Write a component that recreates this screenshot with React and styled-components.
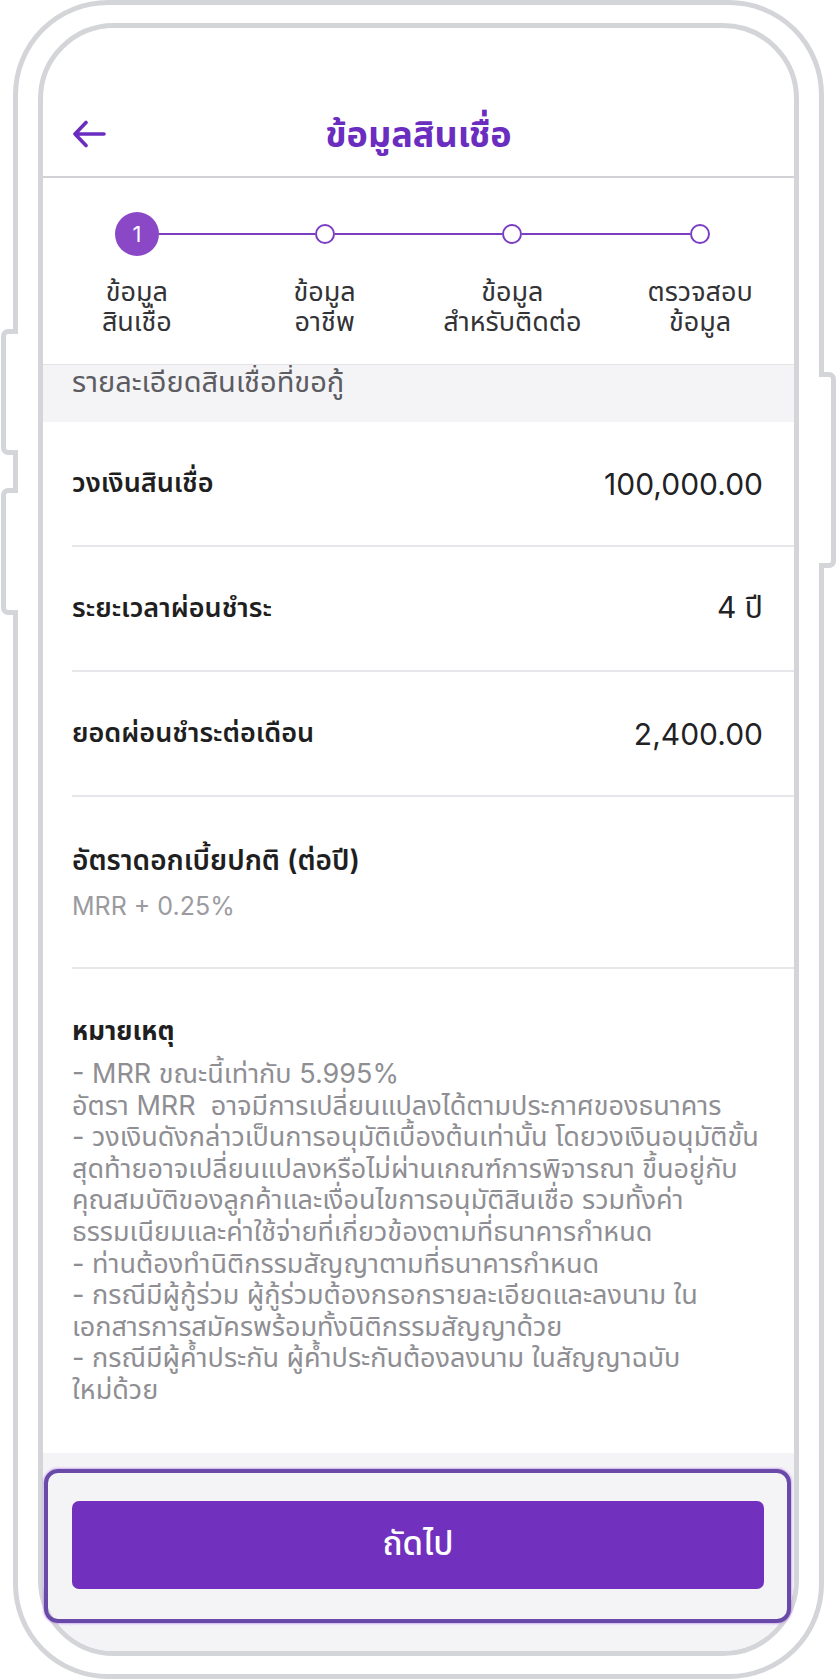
import React from "react";
import styled, { createGlobalStyle } from "styled-components";

const GlobalStyle = createGlobalStyle`
  html, body {
    margin: 0;
    padding: 0;
    background: #ffffff;
  }
  body {
    font-family: "Inter", "Noto Sans Thai", "Noto Sans Thai UI", "Noto Sans", sans-serif;
    -webkit-font-smoothing: antialiased;
  }
  * { box-sizing: border-box; }
`;

const FRAME = "#d4d5d8";
const PURPLE = "#6b2cc0";

const Phone = styled.div`
  position: relative;
  width: 837px;
  height: 1680px;
  overflow: hidden;
`;

const OuterFrame = styled.div`
  margin-left: 13px;
  width: 811px;
  height: 1679px;
  border: 5px solid ${FRAME};
  border-radius: 95px;
  padding: 18px 20px;
  display: flex;
`;

const SideButton = styled.div`
  position: absolute;
  top: ${(p) => p.$top}px;
  height: ${(p) => p.$height}px;
  width: 17px;
  background: #ffffff;
  border: 5px solid ${FRAME};
  ${(p) =>
    p.$side === "left"
      ? `left: 1px; border-right: none; border-radius: 7px 0 0 7px;`
      : `left: 819px; border-left: none; border-radius: 0 7px 7px 0;`}
`;

const Screen = styled.div`
  flex: 1;
  border: 5px solid ${FRAME};
  border-radius: 76px;
  overflow: hidden;
  display: flex;
  flex-direction: column;
  background: #ffffff;
`;

const Header = styled.header`
  flex-shrink: 0;
  height: 150px;
  padding-top: 63px;
  display: grid;
  grid-template-columns: 1fr auto 1fr;
  align-items: center;
  border-bottom: 2px solid #d2d2d6;
`;

const BackButton = styled.button`
  justify-self: start;
  margin-left: 29px;
  padding: 0;
  border: none;
  background: none;
  display: flex;
  cursor: pointer;
`;

const Title = styled.h1`
  margin: 0;
  font-size: 36px;
  font-weight: 700;
  color: ${PURPLE};
  line-height: 44px;
`;

const Stepper = styled.div`
  flex-shrink: 0;
  height: 186px;
  padding-top: 34px;
  display: grid;
  grid-template-columns: repeat(4, 1fr);
`;

const Step = styled.div`
  display: flex;
  flex-direction: column;
  align-items: center;
`;

const Track = styled.div`
  width: 100%;
  height: 44px;
  display: flex;
  align-items: center;
`;

const HalfLine = styled.div`
  flex: 1;
  height: 2px;
  background: ${(p) => (p.$hidden ? "transparent" : "#7b3ec3")};
`;

const Dot = styled.div`
  flex-shrink: 0;
  display: flex;
  align-items: center;
  justify-content: center;
  border-radius: 50%;
  ${(p) =>
    p.$active
      ? `width: 44px; height: 44px; background: #8a48c7; color: #fff; font-size: 22px;`
      : `width: 20px; height: 20px; background: #fff; border: 2px solid #7b3ec3;`}
`;

const StepLabel = styled.div`
  margin-top: 21px;
  font-size: 27px;
  line-height: 30px;
  color: #333336;
  text-align: center;
`;

const Body = styled.div`
  flex: 1;
  overflow: hidden;
  display: flex;
  flex-direction: column;
`;

const SectionHead = styled.div`
  flex-shrink: 0;
  height: 58px;
  overflow: hidden;
  background: #f4f4f7;
  border-top: 1px solid #e4e4e8;
  padding-left: 29px;
`;

const SectionText = styled.div`
  margin-top: 2px;
  font-size: 29px;
  line-height: 29px;
  color: #5c5c61;
`;

const DetailRow = styled.div`
  flex-shrink: 0;
  margin-left: 29px;
  padding-right: 31px;
  height: 125px;
  display: flex;
  justify-content: space-between;
  align-items: center;
  border-bottom: 2px solid #e7e7eb;
`;

const RowLabel = styled.div`
  font-size: 27px;
  font-weight: 600;
  color: #1f1f22;
`;

const RowValue = styled.div`
  font-size: 30px;
  color: #222225;
`;

const RateRow = styled.div`
  flex-shrink: 0;
  margin-left: 29px;
  height: 172px;
  padding-top: 45px;
  display: flex;
  flex-direction: column;
  gap: 13px;
  border-bottom: 2px solid #e7e7eb;
`;

const RateTitle = styled(RowLabel)`
  font-size: 28px;
  line-height: 36px;
`;

const RateSub = styled.div`
  font-size: 25px;
  line-height: 30px;
  color: #9b9b9f;
`;

const Notes = styled.div`
  flex: 1;
  padding: 44px 31px 0 29px;
`;

const NotesTitle = styled.div`
  font-size: 26px;
  font-weight: 700;
  line-height: 36px;
  color: #1f1f22;
`;

const NotesText = styled.p`
  margin: 9px 0 0;
  font-size: 27px;
  line-height: 31.6px;
  color: #8e8e93;
  white-space: pre;
`;

const Footer = styled.div`
  flex-shrink: 0;
  height: 198px;
  background: #f4f4f7;
  padding: 48px 30px 0 29px;
`;

const NextButton = styled.button`
  width: 100%;
  height: 88px;
  border: none;
  border-radius: 7px;
  background: #7230be;
  color: #ffffff;
  font-family: inherit;
  font-size: 33px;
  font-weight: 500;
  cursor: pointer;
`;

const Highlight = styled.div`
  position: absolute;
  left: 44px;
  top: 1469px;
  width: 747px;
  height: 154px;
  border: 4px solid #6a4aa8;
  border-radius: 14px;
  box-shadow: 0 0 2px 1px rgba(176, 110, 230, 0.5);
  pointer-events: none;
`;

const BackArrow = () => (
  <svg width="34" height="28" viewBox="0 0 34 28" fill="none">
    <path
      d="M32 14H3M14 2.5L3 14l11 11.5"
      stroke={PURPLE}
      strokeWidth="3.6"
      strokeLinecap="round"
      strokeLinejoin="round"
    />
  </svg>
);

const steps = [
  ["ข้อมูล", "สินเชื่อ"],
  ["ข้อมูล", "อาชีพ"],
  ["ข้อมูล", "สำหรับติดต่อ"],
  ["ตรวจสอบ", "ข้อมูล"],
];

const rows = [
  ["วงเงินสินเชื่อ", "100,000.00"],
  ["ระยะเวลาผ่อนชำระ", "4 ปี"],
  ["ยอดผ่อนชำระต่อเดือน", "2,400.00"],
];

const noteLines = [
  "- MRR ขณะนี้เท่ากับ 5.995%",
  "อัตรา MRR  อาจมีการเปลี่ยนแปลงได้ตามประกาศของธนาคาร",
  "- วงเงินดังกล่าวเป็นการอนุมัติเบื้องต้นเท่านั้น โดยวงเงินอนุมัติขั้น",
  "สุดท้ายอาจเปลี่ยนแปลงหรือไม่ผ่านเกณฑ์การพิจารณา ขึ้นอยู่กับ",
  "คุณสมบัติของลูกค้าและเงื่อนไขการอนุมัติสินเชื่อ รวมทั้งค่า",
  "ธรรมเนียมและค่าใช้จ่ายที่เกี่ยวข้องตามที่ธนาคารกำหนด",
  "- ท่านต้องทำนิติกรรมสัญญาตามที่ธนาคารกำหนด",
  "- กรณีมีผู้กู้ร่วม ผู้กู้ร่วมต้องกรอกรายละเอียดและลงนาม ใน",
  "เอกสารการสมัครพร้อมทั้งนิติกรรมสัญญาด้วย",
  "- กรณีมีผู้ค้ำประกัน ผู้ค้ำประกันต้องลงนาม ในสัญญาฉบับ",
  "ใหม่ด้วย",
];

export default function App() {
  return (
    <>
      <GlobalStyle />
      <Phone>
        <OuterFrame>
          <Screen>
            <Header>
              <BackButton aria-label="back">
                <BackArrow />
              </BackButton>
              <Title>ข้อมูลสินเชื่อ</Title>
              <span />
            </Header>

            <Stepper>
              {steps.map((label, i) => (
                <Step key={i}>
                  <Track>
                    <HalfLine $hidden={i === 0} />
                    <Dot $active={i === 0}>{i === 0 ? "1" : null}</Dot>
                    <HalfLine $hidden={i === steps.length - 1} />
                  </Track>
                  <StepLabel>
                    {label[0]}
                    <br />
                    {label[1]}
                  </StepLabel>
                </Step>
              ))}
            </Stepper>

            <Body>
              <SectionHead>
                <SectionText>รายละเอียดสินเชื่อที่ขอกู้</SectionText>
              </SectionHead>

              {rows.map(([label, value]) => (
                <DetailRow key={label}>
                  <RowLabel>{label}</RowLabel>
                  <RowValue>{value}</RowValue>
                </DetailRow>
              ))}

              <RateRow>
                <RateTitle>อัตราดอกเบี้ยปกติ (ต่อปี)</RateTitle>
                <RateSub>MRR + 0.25%</RateSub>
              </RateRow>

              <Notes>
                <NotesTitle>หมายเหตุ</NotesTitle>
                <NotesText>{noteLines.join("\n")}</NotesText>
              </Notes>
            </Body>

            <Footer>
              <NextButton>ถัดไป</NextButton>
            </Footer>
          </Screen>
        </OuterFrame>

        <SideButton $side="left" $top={329} $height={126} />
        <SideButton $side="left" $top={488} $height={127} />
        <SideButton $side="right" $top={372} $height={196} />
        <Highlight />
      </Phone>
    </>
  );
}
